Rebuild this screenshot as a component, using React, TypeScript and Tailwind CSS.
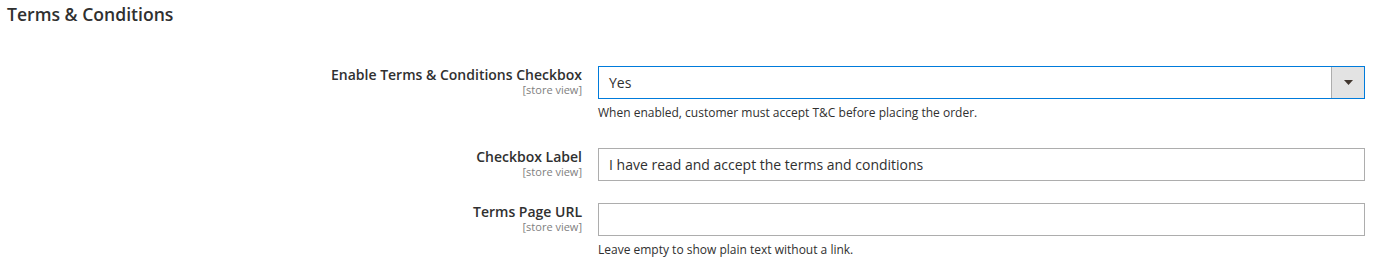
const font = { fontFamily: '"Open Sans", "Noto Sans", sans-serif' }

interface FieldRowProps {
  label: string
  note?: string
  children: React.ReactNode
  className?: string
}

function FieldRow({ label, note, children, className = '' }: FieldRowProps) {
  return (
    <div className={`flex ${className}`}>
      <div className="w-[582px] shrink-0 text-right">
        <div className="text-[14px] leading-[18px] font-semibold text-[#303030]">{label}</div>
        <div className="text-[11px] leading-[12px] text-[#808080]">[store view]</div>
      </div>
      <div className="ml-4 mr-[9px] flex-1">
        {children}
        {note && <div className="mt-[5px] text-[12px] leading-[17px] text-[#303030]">{note}</div>}
      </div>
    </div>
  )
}

export default function App() {
  return (
    <div className="h-[268px] w-[1374px] bg-white" style={font}>
      <h2 className="pt-[3px] pl-[7px] text-[17.6px] leading-[22px] font-semibold text-[#303030]">
        Terms &amp; Conditions
      </h2>

      <div className="mt-[41px]">
        <FieldRow
          label="Enable Terms & Conditions Checkbox"
          note="When enabled, customer must accept T&C before placing the order."
        >
          <div className="flex h-[33px] border border-[#007bdb] bg-white">
            <div className="flex flex-1 items-center pl-[10px] text-[14px] text-[#303030]">Yes</div>
            <div className="flex w-[33px] items-center justify-center border-l border-[#adadad] bg-[#e3e3e3]">
              <svg width="9" height="5" viewBox="0 0 9 5">
                <path d="M0 0h9L4.5 5z" fill="#41362f" />
              </svg>
            </div>
          </div>
        </FieldRow>

        <FieldRow label="Checkbox Label" className="mt-[27px]">
          <div className="flex h-[33px] items-center border border-[#adadad] pl-[10px] text-[14px] text-[#303030]">
            I have read and accept the terms and conditions
          </div>
        </FieldRow>

        <FieldRow
          label="Terms Page URL"
          note="Leave empty to show plain text without a link."
          className="mt-[22px]"
        >
          <div className="h-[33px] border border-[#adadad]" />
        </FieldRow>
      </div>
    </div>
  )
}
